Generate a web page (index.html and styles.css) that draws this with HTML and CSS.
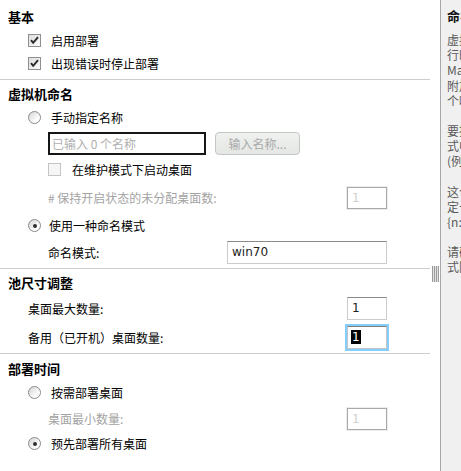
FILE: index.html
```html
<!DOCTYPE html>
<html lang="zh-CN">
<head>
  <meta charset="UTF-8">
  <title>部署设置</title>
  <link rel="stylesheet" href="styles.css">
</head>
<body>
  <div class="main">
    <div class="section first">
      <h2>基本</h2>
      <div class="row lead">
        <span class="cb"><svg width="11" height="11" viewBox="0 0 11 11"><path d="M2 5.2l2.2 2.6L9 2.2" fill="none" stroke="#2b2b2b" stroke-width="2"/></svg></span>
        <span>启用部署</span>
      </div>
      <div class="row">
        <span class="cb"><svg width="11" height="11" viewBox="0 0 11 11"><path d="M2 5.2l2.2 2.6L9 2.2" fill="none" stroke="#2b2b2b" stroke-width="2"/></svg></span>
        <span>出现错误时停止部署</span>
      </div>
    </div>

    <div class="section naming">
      <h2>虚拟机命名</h2>
      <div class="row lead">
        <span class="rb"></span>
        <span>手动指定名称</span>
      </div>
      <div class="row sub names">
        <div class="field dark wide muted">已输入 0 个名称</div>
        <button class="btn">输入名称...</button>
      </div>
      <div class="row sub">
        <span class="cb off"></span>
        <span class="cb-label">在维护模式下启动桌面</span>
      </div>
      <div class="row sub spread tall">
        <span class="muted">#&nbsp;保持开启状态的未分配桌面数:</span>
        <div class="field num off">1</div>
      </div>
      <div class="row">
        <span class="rb on"><span class="dot"></span></span>
        <span class="tight">使用一种命名模式</span>
      </div>
      <div class="row sub spread pad">
        <span>命名模式:</span>
        <div class="field pattern">win70</div>
      </div>
    </div>

    <div class="section pool">
      <h2>池尺寸调整</h2>
      <div class="row spread pad level1">
        <span>桌面最大数量:</span>
        <div class="field num">1</div>
      </div>
      <div class="row spread level1 focus-row">
        <span>备用（已开机）桌面数量:</span>
        <div class="field num focus"><span class="sel">1</span></div>
      </div>
    </div>

    <div class="section timing">
      <h2>部署时间</h2>
      <div class="row lead">
        <span class="rb"></span>
        <span>按需部署桌面</span>
      </div>
      <div class="row sub spread pad">
        <span class="muted">桌面最小数量:</span>
        <div class="field num off">1</div>
      </div>
      <div class="row">
        <span class="rb on"><span class="dot"></span></span>
        <span>预先部署所有桌面</span>
      </div>
    </div>
  </div>

  <div class="splitter">
    <div class="grip"></div>
  </div>

  <div class="side">
    <h3>命名模式</h3>
    <p>
      虚拟机名称将根据此命名模式生成<br>
      行时会为每台虚拟机附加唯一编号<br>
      MaxNumber 台虚拟机<br>
      附加编号标记时系统会自动添加一<br>
      个唯一编号
    </p>
    <p>
      要指定编号的位置请在命名模<br>
      式中使用 {n} 标记<br>
      (例如 win-{n}-desk)
    </p>
    <p>
      这个标记还可以指定固定长度<br>
      定长编号不足时以零填充<br>
      {n:fixed=3}
    </p>
    <p>
      请确保名称不超过 15 个字符的模<br>
      式限制
    </p>
  </div>
</body>
</html>
```

FILE: styles.css
```css
* {
  box-sizing: border-box;
}

body {
  margin: 0;
  height: 471px;
  overflow: hidden;
  display: flex;
  background: #fff;
  color: #000;
  font-family: "DejaVu Sans", "Noto Sans CJK SC", sans-serif;
  font-size: 12px;
}

.main {
  width: 430px;
  flex: none;
  padding-top: 3px;
}

.section {
  padding: 3px 0 2px;
  border-bottom: 1px solid #cdcdcd;
}

.section.first {
  padding-bottom: 4px;
}

.section.pool {
  padding-bottom: 1px;
}

.section.timing {
  padding-top: 4px;
  border-bottom: none;
}

.section h2 {
  margin: 0;
  height: 22px;
  line-height: 22px;
  padding-left: 8px;
  font-family: "Noto Sans CJK SC", sans-serif;
  font-size: 13px;
  font-weight: bold;
}

.row {
  display: flex;
  align-items: center;
  gap: 10px;
  height: 23px;
  padding-left: 28px;
  font-family: "Noto Sans CJK SC", sans-serif;
  white-space: nowrap;
}

.row.lead {
  margin-top: 1px;
}

.row.sub {
  padding-left: 48px;
}

.row.spread {
  justify-content: space-between;
  padding-right: 43px;
}

.row.pad {
  height: 28px;
  padding-top: 1px;
}

.naming .row.pad {
  height: 29px;
}

.row.tall {
  height: 33px;
}

.row.names {
  height: 29px;
  gap: 9px;
}

.row.level1 {
  padding-left: 28px;
}

.row.focus-row {
  height: 30px;
}

.tight {
  margin-left: -2px;
}

.cb-label {
  margin-left: 1px;
}

.muted {
  color: #a3a3a3;
}

/* checkboxes and radios */
.cb {
  flex: none;
  width: 13px;
  height: 13px;
  border: 1px solid #8f8f8f;
  background: linear-gradient(135deg, #dedede, #fbfbfb);
  display: flex;
  align-items: center;
  justify-content: center;
}

.cb.off {
  border-color: #c4c4c4;
  background: #f6f6f6;
}

.rb {
  flex: none;
  width: 13px;
  height: 13px;
  border-radius: 50%;
  border: 1px solid #8a8a8a;
  background: linear-gradient(135deg, #d4d4d4, #fdfdfd 70%);
  display: flex;
  align-items: center;
  justify-content: center;
}

.rb .dot {
  width: 4px;
  height: 4px;
  border-radius: 50%;
  background: #2e2e2e;
}

/* fields */
.field {
  height: 23px;
  line-height: 21px;
  padding: 0 4px;
  border: 1px solid #cbcbcb;
  border-top-color: #8a8a8a;
  background: #fff;
  font-family: "DejaVu Sans", sans-serif;
  font-size: 12px;
  color: #222;
}

.field.dark {
  border: 2px solid #161616;
  line-height: 19px;
  padding: 0 2px;
  font-family: "Noto Sans CJK SC", sans-serif;
}

.field.wide {
  width: 158px;
}

.field.muted {
  color: #b0b0b0;
}

.field.num {
  width: 40px;
}

.field.off {
  height: 22px;
  line-height: 20px;
  border-color: #a9a9a9;
  color: #d0d0d0;
  box-shadow: 0 0 0 1px #ececec;
}

.field.pattern {
  width: 160px;
}

.field.focus {
  border-color: #c4c4c4;
  border-top-color: #7d7d7d;
  box-shadow: 0 0 0 2px #86cdfb;
  padding-left: 3px;
}

.sel {
  background: #000;
  color: #fff;
  padding: 0 1px;
}

.btn {
  width: 85px;
  height: 23px;
  padding: 0;
  border: 1px solid #c3c7c3;
  border-radius: 4px;
  background: linear-gradient(#eff1ef, #e4e7e4);
  color: #a9a9a9;
  font-family: "Noto Sans CJK SC", sans-serif;
  font-size: 12px;
}

/* splitter and help panel */
.splitter {
  width: 10px;
  flex: none;
  padding: 266px 0 0 2px;
}

.grip {
  width: 7px;
  height: 16px;
  background: repeating-linear-gradient(to right, #9a9a9a 0 1px, #e2e2e2 1px 2px);
}

.side {
  flex: 1;
  min-width: 0;
  overflow: hidden;
  border-left: 1px solid #a8a8a8;
  background: #f0f0f0;
  padding: 8px 0 0 6px;
  color: #5a5a5a;
  font-size: 12px;
  line-height: 15.2px;
  white-space: nowrap;
}

.side h3 {
  margin: 0;
  height: 16px;
  line-height: 16px;
  font-family: "Noto Sans CJK SC", sans-serif;
  font-size: 13px;
  font-weight: bold;
  color: #111;
}

.side p {
  margin: 8px 0 0;
  font-family: "Noto Sans CJK SC", "DejaVu Sans", sans-serif;
}

.side p + p {
  margin-top: 15px;
}
```
